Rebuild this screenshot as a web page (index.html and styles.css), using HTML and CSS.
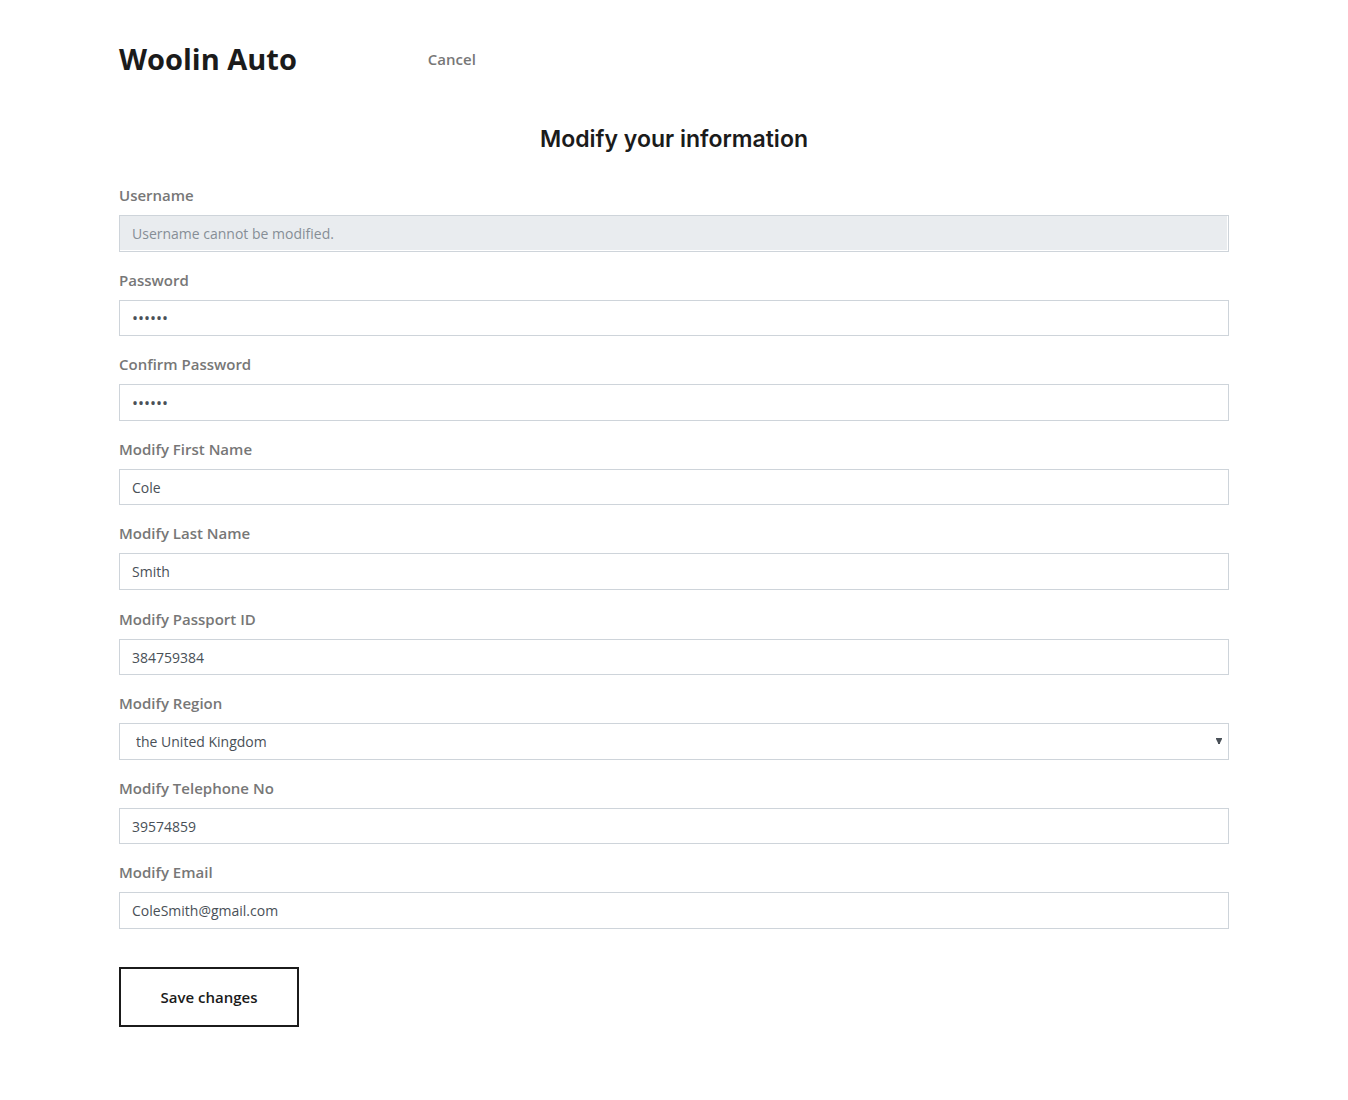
FILE: index.html
```html
<!DOCTYPE html>
<html lang="en">
<head>
  <meta charset="utf-8">
  <meta name="viewport" content="width=device-width, initial-scale=1">
  <title>Woolin Auto</title>
  <link rel="stylesheet" href="styles.css">
</head>
<body>
  <div class="container">
    <header class="site-header">
      <a class="brand" href="#">Woolin Auto</a>
      <nav class="site-nav"><a class="nav-link" href="#">Cancel</a></nav>
    </header>
    <main>
      <h1 class="page-title">Modify your information</h1>
      <form class="form">
        <div class="group">
          <div class="field">
            <label for="username">Username</label>
            <input class="control" id="username" type="text" placeholder="Username cannot be modified." disabled>
          </div>
          <div class="field alt">
            <label for="password">Password</label>
            <input class="control" id="password" type="password" value="secret">
          </div>
          <div class="field">
            <label for="confirm">Confirm Password</label>
            <input class="control" id="confirm" type="password" value="secret">
          </div>
          <div class="field alt">
            <label for="first-name">Modify First Name</label>
            <input class="control" id="first-name" type="text" value="Cole">
          </div>
          <div class="field">
            <label for="last-name">Modify Last Name</label>
            <input class="control" id="last-name" type="text" value="Smith">
          </div>
        </div>
        <div class="group">
          <div class="field alt">
            <label for="passport">Modify Passport ID</label>
            <input class="control" id="passport" type="text" value="384759384">
          </div>
          <div class="field">
            <label for="region">Modify Region</label>
            <div class="select-wrap">
              <select class="control" id="region">
                <option>the United Kingdom</option>
              </select>
              <svg class="caret" width="6" height="6" viewBox="0 0 6 6" aria-hidden="true"><path d="M0 0h6v1L4 5v1H2V5L0 1z" fill="#495057"/></svg>
            </div>
          </div>
          <div class="field alt">
            <label for="telephone">Modify Telephone No</label>
            <input class="control" id="telephone" type="text" value="39574859">
          </div>
          <div class="field">
            <label for="email">Modify Email</label>
            <input class="control" id="email" type="email" value="ColeSmith@gmail.com">
          </div>
        </div>
        <button class="save" type="submit">Save changes</button>
      </form>
    </main>
  </div>
</body>
</html>
```
FILE: styles.css
```css
*,
*::before,
*::after {
  box-sizing: border-box;
}

body {
  margin: 0;
  background: #fff;
  color: #777;
  font-family: "Open Sans", "Noto Sans", sans-serif;
  font-size: 15px;
  line-height: 24px;
}

.container {
  max-width: 1142px;
  margin: 0 auto;
  padding: 36px 16px 72px;
}

.site-header {
  display: flex;
  align-items: center;
  gap: 131px;
  height: 46px;
}

.brand {
  color: #1b1b1b;
  font-size: 29px;
  font-weight: 700;
  line-height: 46px;
  text-decoration: none;
}

.nav-link {
  color: #777;
  font-weight: 600;
  text-decoration: none;
}

.page-title {
  margin: 40px 0 27px;
  color: #1b1b1b;
  font-family: Inter, sans-serif;
  font-size: 23px;
  font-weight: 600;
  line-height: 34px;
  text-align: center;
}

.form,
.group {
  display: flex;
  flex-direction: column;
}

.form {
  gap: 17px;
}

.group {
  gap: 16px;
}

.field {
  display: flex;
  flex-direction: column;
  gap: 8px;
}

.field label {
  font-weight: 600;
}

.control {
  display: block;
  width: 100%;
  height: 37px;
  margin: 0;
  padding: 0 12px;
  border: 1px solid #ced4da;
  border-radius: 0;
  background: #fff;
  color: #495057;
  font: inherit;
  font-size: 14px;
}

.alt .control {
  height: 36px;
}

.control[type="password"] {
  font-size: 16px;
}

.control:disabled {
  background: #e9ecef;
  box-shadow: inset -1px -1px 0 #fff;
}

.control::placeholder {
  color: #868e96;
  opacity: 1;
}

.select-wrap {
  position: relative;
}

select.control {
  appearance: none;
  padding: 0 16px;
}

.caret {
  position: absolute;
  top: 15px;
  right: 7px;
  pointer-events: none;
}

.save {
  align-self: flex-start;
  width: 180px;
  height: 60px;
  margin-top: 21px;
  border: 2px solid #1b1b1b;
  background: #fff;
  color: #1b1b1b;
  font: inherit;
  font-weight: 600;
}
```
